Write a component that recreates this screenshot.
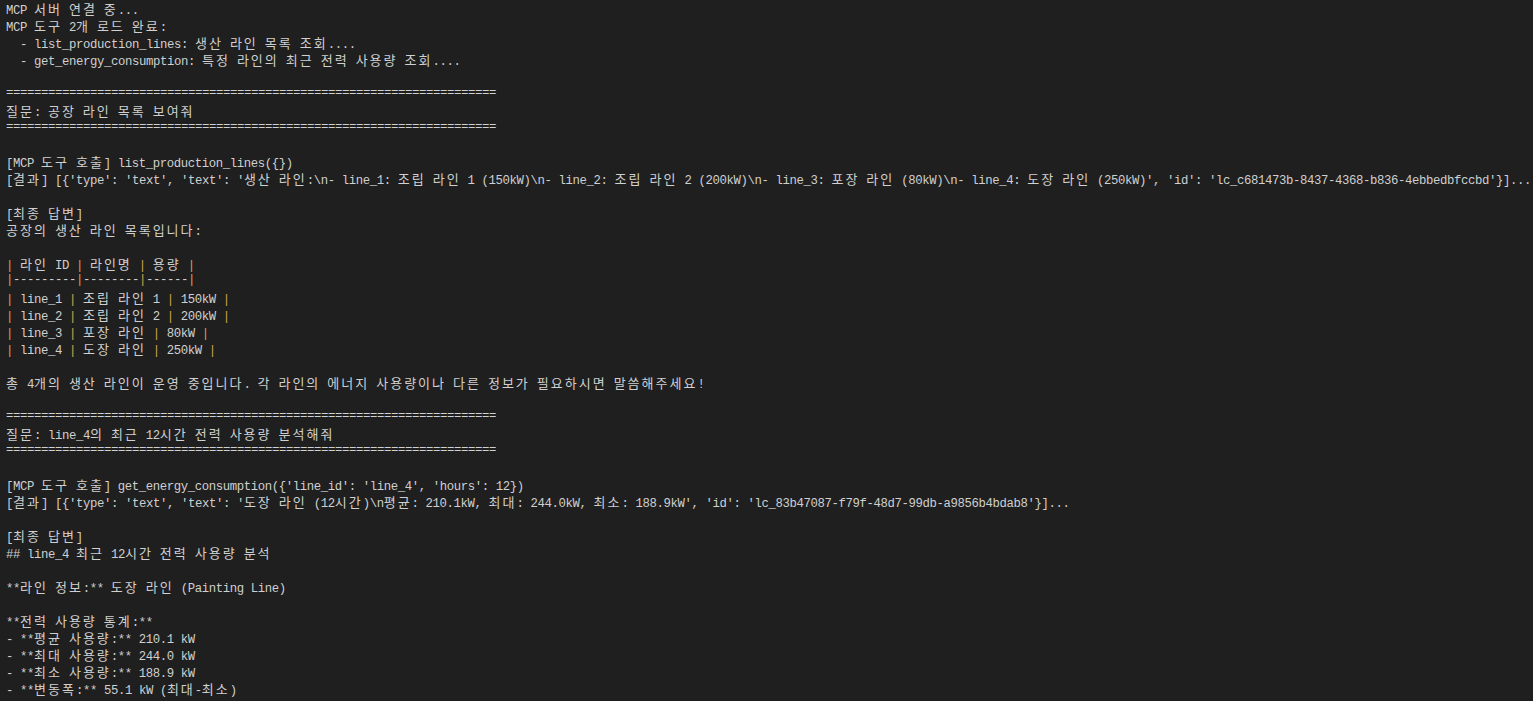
const rule = '='.repeat(70)

const lines = [
  'MCP 서버 연결 중...',
  'MCP 도구 2개 로드 완료:',
  '  - list_production_lines: 생산 라인 목록 조회....',
  '  - get_energy_consumption: 특정 라인의 최근 전력 사용량 조회....',
  '',
  rule,
  '질문: 공장 라인 목록 보여줘',
  rule,
  '',
  '[MCP 도구 호출] list_production_lines({})',
  "[결과] [{'type': 'text', 'text': '생산 라인:\\n- line_1: 조립 라인 1 (150kW)\\n- line_2: 조립 라인 2 (200kW)\\n- line_3: 포장 라인 (80kW)\\n- line_4: 도장 라인 (250kW)', 'id': 'lc_c681473b-8437-4368-b836-4ebbedbfccbd'}]...",
  '',
  '[최종 답변]',
  '공장의 생산 라인 목록입니다:',
  '',
  '| 라인 ID | 라인명 | 용량 |',
  '|---------|--------|------|',
  '| line_1 | 조립 라인 1 | 150kW |',
  '| line_2 | 조립 라인 2 | 200kW |',
  '| line_3 | 포장 라인 | 80kW |',
  '| line_4 | 도장 라인 | 250kW |',
  '',
  '총 4개의 생산 라인이 운영 중입니다. 각 라인의 에너지 사용량이나 다른 정보가 필요하시면 말씀해주세요!',
  '',
  rule,
  '질문: line_4의 최근 12시간 전력 사용량 분석해줘',
  rule,
  '',
  "[MCP 도구 호출] get_energy_consumption({'line_id': 'line_4', 'hours': 12})",
  "[결과] [{'type': 'text', 'text': '도장 라인 (12시간)\\n평균: 210.1kW, 최대: 244.0kW, 최소: 188.9kW', 'id': 'lc_83b47087-f79f-48d7-99db-a9856b4bdab8'}]...",
  '',
  '[최종 답변]',
  '## line_4 최근 12시간 전력 사용량 분석',
  '',
  '**라인 정보:** 도장 라인 (Painting Line)',
  '',
  '**전력 사용량 통계:**',
  '- **평균 사용량:** 210.1 kW',
  '- **최대 사용량:** 244.0 kW',
  '- **최소 사용량:** 188.9 kW',
  '- **변동폭:** 55.1 kW (최대-최소)',
]

// hangul runs get a CJK font padded out to two terminal cells each
function Line({ text }) {
  const table = text.startsWith('|')
  const parts = text.split(/([\uAC00-\uD7A3]+|\|)/).filter(Boolean)
  return (
    <div className="h-[17px] leading-[17px] whitespace-pre">
      {parts.map((p, i) => {
        if (/^[\uAC00-\uD7A3]+$/.test(p))
          return (
            <span key={i} className="font-['Noto_Sans_CJK_KR',sans-serif] text-[13px] tracking-[2px]">
              {p}
            </span>
          )
        if (p === '|' && table)
          return (
            <span key={i} className="text-[#d2a44c]">
              {p}
            </span>
          )
        return <span key={i}>{p}</span>
      })}
    </div>
  )
}

export default function App() {
  return (
    <div className="w-[1533px] h-[701px] overflow-hidden bg-[#1f1f1f] text-[#d0d0d0] font-['Liberation_Mono',monospace] text-[12.3px] tracking-[-0.38px] pl-[6px]">
      {lines.map((l, i) => (
        <Line key={i} text={l} />
      ))}
    </div>
  )
}
